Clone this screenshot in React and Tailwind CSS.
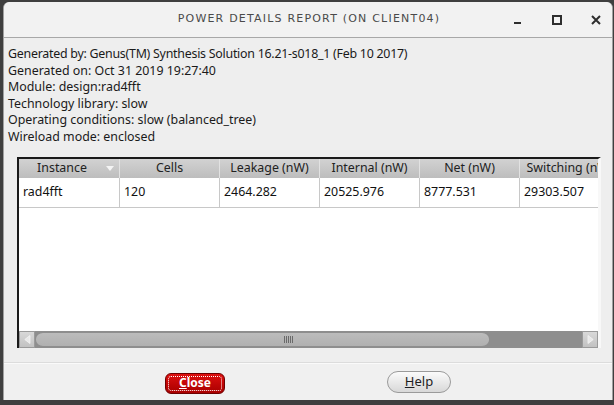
import React from 'react'

const columns = [
  { label: 'Instance', sort: true },
  { label: 'Cells' },
  { label: 'Leakage (nW)' },
  { label: 'Internal (nW)' },
  { label: 'Net (nW)' },
  { label: 'Switching (nW)' },
]

const row = ['rad4fft', '120', '2464.282', '20525.976', '8777.531', '29303.507']

const info = [
  'Generated by: Genus(TM) Synthesis Solution 16.21-s018_1 (Feb 10 2017)',
  'Generated on: Oct 31 2019 19:27:40',
  'Module: design:rad4fft',
  'Technology library: slow',
  'Operating conditions: slow (balanced_tree)',
  'Wireload mode: enclosed',
]

function TitleBar() {
  return (
    <div className="relative h-[36px] shrink-0 flex items-center justify-center bg-[#f2f2f2] border-b border-[#a8a8a8] rounded-t-[6px]">
      <span className="font-['DejaVu_Sans',sans-serif] text-[11px] uppercase tracking-[1.2px] text-[#4a4a4a] pl-[2px]">
        Power Details Report (on client04)
      </span>
      {/* window controls */}
      <div className="absolute right-[11px] top-0 h-full flex items-center gap-[29px]">
        <svg width="10" height="10" viewBox="0 0 10 10">
          <rect x="1" y="7" width="7" height="2" fill="#2e2e2e" />
        </svg>
        <svg width="10" height="10" viewBox="0 0 10 10">
          <rect x="1" y="1" width="8" height="8" fill="none" stroke="#2e2e2e" strokeWidth="2" />
        </svg>
        <svg width="10" height="10" viewBox="0 0 10 10">
          <path d="M1 1 L9 9 M9 1 L1 9" stroke="#2e2e2e" strokeWidth="2" />
        </svg>
      </div>
    </div>
  )
}

function Table() {
  return (
    <div className="ml-[13px] w-[584px] h-[191px] flex flex-col border-l-2 border-t-2 border-[#1a1a1a] border-r-[3px] border-r-[#f8f8f8] bg-white">
      {/* header */}
      <div className="flex h-[19px] shrink-0 bg-linear-to-b from-[#d2d2d2] to-[#bdbdbd] overflow-hidden">
        {columns.map((c, i) => (
          <div
            key={c.label}
            className={`relative w-[100px] shrink-0 flex items-center justify-center text-[12.4px] text-[#222] whitespace-nowrap ${i > 0 ? 'border-l border-[#e2e2e2]' : ''}`}
          >
            <span className={c.sort ? 'pr-[14px]' : ''}>{c.label}</span>
            {c.sort && (
              <svg className="absolute right-[5px] top-[7px]" width="8" height="5" viewBox="0 0 8 5">
                <path d="M0 0 L8 0 L4 5 Z" fill="#f4f4f4" />
              </svg>
            )}
          </div>
        ))}
      </div>
      {/* data row */}
      <div className="flex h-[30px] shrink-0 border-b border-[#c8c8c8] overflow-hidden">
        {row.map((v, i) => (
          <div
            key={i}
            className={`w-[100px] shrink-0 flex items-center pl-[4px] text-[12.4px] text-[#111] ${i > 0 ? 'border-l border-[#c8c8c8]' : ''}`}
          >
            {v}
          </div>
        ))}
      </div>
      <div className="flex-1" />
      {/* horizontal scrollbar */}
      <div className="flex h-[17px] shrink-0 bg-[#8e8e8e]">
        <div className="w-[16px] shrink-0 bg-linear-to-b from-[#d8d8d8] to-[#c2c2c2] border border-[#9a9a9a] flex items-center justify-center">
          <svg width="7" height="9" viewBox="0 0 7 9">
            <path d="M6 0.5 L0.8 4.5 L6 8.5 Z" fill="#e8e8e8" stroke="#f4f4f4" strokeWidth="0.8" />
          </svg>
        </div>
        <div className="flex-1 flex">
          <div className="w-[455px] h-full rounded-[8px] bg-linear-to-b from-[#bcbcbc] to-[#b0b0b0] border-t-2 border-b-2 border-[#8e8e8e] border-r border-l flex items-center justify-center">
            <div className="flex gap-[1px] ml-[52px]">
              {[0, 1, 2, 3, 4].map((k) => (
                <div key={k} className="w-[1px] h-[7px] bg-[#6a6a6a]" />
              ))}
            </div>
          </div>
        </div>
        <div className="w-[16px] shrink-0 bg-linear-to-b from-[#d8d8d8] to-[#c2c2c2] border border-[#9a9a9a] flex items-center justify-center">
          <svg width="7" height="9" viewBox="0 0 7 9">
            <path d="M1 0.5 L6.2 4.5 L1 8.5 Z" fill="#e8e8e8" stroke="#f4f4f4" strokeWidth="0.8" />
          </svg>
        </div>
      </div>
    </div>
  )
}

export default function App() {
  return (
    <div className="w-[614px] h-[405px] bg-[#3f3f3f] overflow-hidden font-['Noto_Sans',sans-serif]">
      <div className="ml-[3px] mt-[2px] w-[610px] h-[398px] bg-[#eeeeee] rounded-t-[6px] flex flex-col border-x border-[#a0a0a0]">
        <TitleBar />

        {/* report details */}
        <div className="pt-[8px] pl-[4px] text-[12.4px] leading-[16.6px] text-[#1a1a1a]">
          {info.map((l, i) => (
            <div key={l} className={`whitespace-nowrap ${i === 0 ? 'tracking-[-0.25px]' : ''}`}>{l}</div>
          ))}
        </div>

        <div className="mt-[11px]">
          <Table />
        </div>

        {/* buttons */}
        <div className="mt-[15px] flex-1 border-t border-[#fafafa] shadow-[0_-1px_0_#dcdcdc] bg-[#f0f0f0] flex items-start">
          <div className="ml-[161px] mt-[9px] w-[60px] h-[21px] rounded-[6px] border border-[#6e0000] bg-linear-to-b from-[#de1010] to-[#a80000] p-[2px]">
            <div className="w-full h-full border border-dotted border-white rounded-[3px] flex items-center justify-center text-[12px] font-bold text-white leading-none">
              <span><span className="underline">C</span>lose</span>
            </div>
          </div>
          <div className="ml-[162px] mt-[7px] w-[64px] h-[22px] rounded-full border border-[#9a9a9a] bg-linear-to-b from-[#fbfbfb] to-[#d8d8d8] flex items-center justify-center text-[13px] text-[#1e1e1e]">
            <span><span className="underline">H</span>elp</span>
          </div>
        </div>
      </div>
    </div>
  )
}
